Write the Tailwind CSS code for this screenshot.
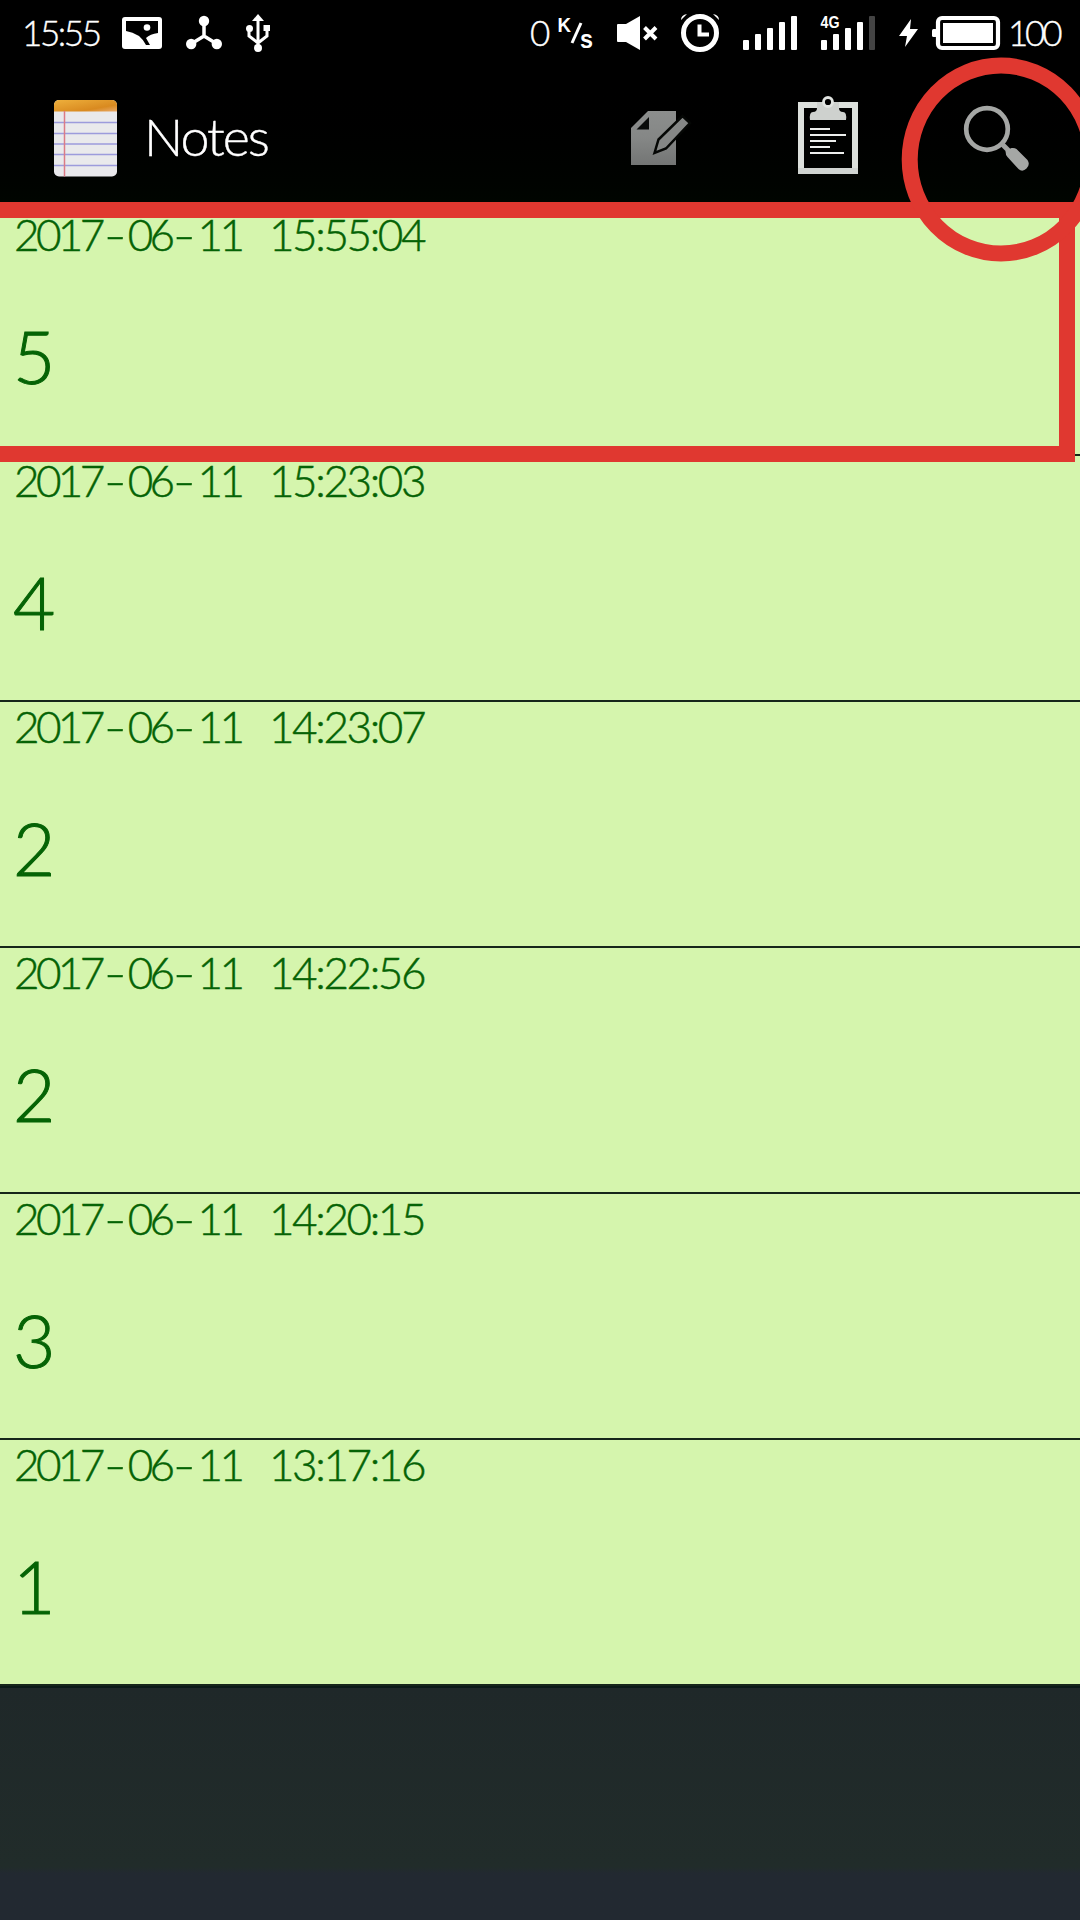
<!DOCTYPE html>
<html lang="en">
<head>
<meta charset="utf-8">
<title>Notes</title>
<script src="https://cdn.jsdelivr.net/npm/@tailwindcss/browser@4"></script>
</head>
<body class="relative flex h-[1920px] w-[1080px] flex-col overflow-hidden bg-[#202b2b] font-['Lato',sans-serif] font-light">

<!-- status bar -->
<div class="flex h-[66px] w-full shrink-0 bg-black text-white [-webkit-text-stroke:0.4px_white]">
  <div class="w-[110px] pl-[22px] pt-[10px] text-[35px] leading-[44px] tracking-[-2.400px] whitespace-nowrap">15:55</div>
  <svg class="w-[65px] h-[66px]" viewBox="110 0 65 66"><rect x="122" y="17" width="40" height="32" rx="3" fill="#fff"/><path d="M126 21h32v12q-8 1-12 5l4 7h-4Q140 33 126 31z" fill="#000"/><circle cx="147" cy="27.500" r="3.300" fill="#fff"/></svg>
  <svg class="w-[60px] h-[66px]" viewBox="175 0 60 66" fill="#fff"><path d="M204 21v15l-13 8M204 36l13 8" stroke="#fff" stroke-width="3.500" fill="none"/><circle cx="204" cy="21" r="5.200"/><circle cx="191.200" cy="44" r="5.200"/><circle cx="216.800" cy="44" r="5.200"/></svg>
  <svg class="w-[285px] h-[66px]" viewBox="235 0 285 66" fill="#fff"><path d="M258 18v30M249 29v7l9 7M267 29v7l-9 7" stroke="#fff" stroke-width="3" fill="none"/><path d="M258 14l6 7h-12z"/><circle cx="258" cy="48" r="4"/><circle cx="249.500" cy="28.500" r="3.500"/><path d="M263.500 25h6.500v6h-6.500z"/></svg>
  <div class="w-[36px] pl-[10px] pt-[10px] text-[35px] leading-[44px]">0</div>
  <svg class="w-[54px] h-[66px]" viewBox="556 0 54 66" fill="#fff" font-family="Liberation Sans" font-weight="bold" font-size="21"><text x="557.500" y="32" textLength="13.500" lengthAdjust="spacingAndGlyphs">K</text><text x="580" y="48" font-size="25" textLength="13" lengthAdjust="spacingAndGlyphs">s</text><path d="M581 23l-9 20" stroke="#fff" stroke-width="3"/></svg>
  <svg class="w-[60px] h-[66px]" viewBox="610 0 60 66" fill="#fff"><path d="M618 24h8l14-8v34l-14-8h-8q-1 0-1-1v-16q0-1 1-1z"/><path d="M644.500 27.500l11.500 11.500M656 27.500L644.500 39" stroke="#fff" stroke-width="4"/></svg>
  <svg class="w-[65px] h-[66px]" viewBox="670 0 65 66" fill="none" stroke="#fff"><circle cx="700" cy="33" r="16.500" stroke-width="5"/><path d="M699.500 24.500v10h9.500" stroke-width="4"/><path d="M681 20q0-5 6-6zM719 20q0-5-6-6z" fill="#fff" stroke="none"/></svg>
  <svg class="w-[75px] h-[66px]" viewBox="735 0 75 66" fill="#fff"><rect x="743" y="40" width="6" height="10" rx="1"/><rect x="755" y="34" width="6" height="16" rx="1"/><rect x="767" y="28" width="6" height="22" rx="1"/><rect x="779" y="22" width="6" height="28" rx="1"/><rect x="791" y="16" width="6" height="34" rx="1"/></svg>
  <svg class="w-[80px] h-[66px]" viewBox="810 0 80 66" fill="#fff"><text x="820.500" y="28" font-family="Liberation Sans" font-weight="bold" font-size="16" textLength="19" lengthAdjust="spacingAndGlyphs">4G</text><rect x="821" y="40" width="6" height="10" rx="1"/><rect x="833" y="34" width="6" height="16" rx="1"/><rect x="845" y="28" width="6" height="22" rx="1"/><rect x="857" y="22" width="6" height="28" rx="1"/><rect x="869" y="16" width="6" height="34" rx="1" fill="#444"/></svg>
  <svg class="w-[35px] h-[66px]" viewBox="890 0 35 66" fill="#fff"><path d="M911 19l-12 17h8l-2 11 13-18h-8z"/></svg>
  <svg class="w-[80px] h-[66px]" viewBox="925 0 80 66" fill="#fff"><rect x="938" y="18" width="60" height="30" rx="4" fill="none" stroke="#fff" stroke-width="4.200"/><rect x="943" y="23" width="50" height="20"/><rect x="932" y="29" width="5" height="8" rx="1.500"/></svg>
  <div class="w-[75px] pl-[3px] pt-[10px] text-[35px] leading-[44px] tracking-[-3.200px] whitespace-nowrap">100</div>
</div>

<!-- action bar -->
<div class="flex h-[144px] w-full shrink-0 bg-linear-to-b from-black to-[#000600] text-white">
  <svg class="w-[143px] h-[144px]" viewBox="0 66 143 144">
    <defs><linearGradient id="or" x2="1" y2="1"><stop stop-color="#eeb03c"/><stop offset=".7" stop-color="#d98a20"/><stop offset="1" stop-color="#e9a968"/></linearGradient>
    <clipPath id="pad"><rect x="54" y="100" width="63" height="76.500" rx="5"/></clipPath></defs>
    <g clip-path="url(#pad)"><path d="M54 100h63v77H54z" fill="#e9e9ec"/><path d="M54 100h63v11.500H54z" fill="url(#or)"/><path d="M54 122.500h63M54 133.500h63M54 144h63M54 154.500h63M54 165.500h63" stroke="#9c9bdc" stroke-width="1.500"/><path d="M64.500 111v66" stroke="#dc7b86" stroke-width="1.500"/></g>
  </svg>
  <div class="w-[467px] pt-[38px] pl-[1px] text-[52px] leading-[64px] tracking-[-2px] [-webkit-text-stroke:0.4px_white]">Notes</div>
  <svg class="w-[150px] h-[144px]" viewBox="610 66 150 144">
    <defs><linearGradient id="dg" x2="0" y2="1"><stop stop-color="#8c8e8d"/><stop offset=".5" stop-color="#858786"/><stop offset="1" stop-color="#737574"/></linearGradient></defs>
    <path d="M648 111h28v54h-45v-37z" fill="url(#dg)"/><path d="M649 117v12.500h-12.500z" fill="#090b0a"/>
    <path d="M654.500 153l4-13.500 24-23.500 7.500 7-24 25.500z" fill="#858786" stroke="#050705" stroke-width="2.500"/>
  </svg>
  <svg class="w-[150px] h-[144px]" viewBox="760 66 150 144">
    <path d="M801 105h54v66h-54z" fill="none" stroke="#dce0dc" stroke-width="6"/>
    <path d="M798 168h60v6h-60z" fill="#d0d4d1"/>
    <path d="M817 102h22v6q0 4 4 4t3 8h-36q-1-8 3-8t4-4z" fill="#ced1ce"/><circle cx="828" cy="102" r="4.500" fill="#000" stroke="#e1e4e1" stroke-width="2.800"/>
    <path d="M810 129h20M810 135h36M810 141h26M810 147h20M810 153h34" stroke="#eceeec" stroke-width="2"/>
  </svg>
  <svg class="w-[170px] h-[144px]" viewBox="910 66 170 144">
    <circle cx="987" cy="129" r="20.800" fill="none" stroke="#a5a7a5" stroke-width="4.700"/><path d="M1001 143l9 9" stroke="#a0a2a0" stroke-width="5"/>
    <path d="M1005.500 151q0 4 2 6l11 12q4 3.500 8-.5t1-8.500l-11-11q-2-1.500-5-1z" fill="#a5a7a5"/>
  </svg>
</div>

<!-- notes -->
<div id="list" class="flex w-full shrink-0 flex-col"></div>

<div class="h-[2px] w-full shrink-0 bg-[#0b1a18]"></div>
<div class="w-full grow bg-linear-to-b from-[#1f2829] from-0% via-[#212c2a] via-77% to-[#222931] to-80%"></div>

<!-- highlight marks over the first note and the search button -->
<div class="absolute left-0 top-[202px] h-[260px] w-[1075px] border-y-[16px] border-r-[16px] border-[#e03830]"></div>
<svg class="absolute left-[890px] top-[50px] h-[220px] w-[190px]" viewBox="890 50 190 220"><ellipse cx="1001" cy="159.500" rx="91.300" ry="94" fill="none" stroke="#e03830" stroke-width="16"/></svg>

<script>
const notes = [
  ['2017-06-11', '15:55:04', '5'],
  ['2017-06-11', '15:23:03', '4'],
  ['2017-06-11', '14:23:07', '2'],
  ['2017-06-11', '14:22:56', '2'],
  ['2017-06-11', '14:20:15', '3'],
  ['2017-06-11', '13:17:16', '1'],
];
const dash = '<span class="inline-block w-[26px] text-center"><span class="inline-block scale-x-[1.400] tracking-normal">-</span></span>';
document.getElementById('list').innerHTML = notes.map(([d, t, n]) => `
  <div class="flex h-[246px] w-full flex-col border-b-2 border-[#16261a] bg-[#d5f5ad] text-[#056305] [-webkit-text-stroke:0.5px_#056305]">
    <div class="flex h-[50px] pl-[14px] text-[44px] leading-[48px] whitespace-nowrap">
      <span class="w-[255px] tracking-[-3.600px]">${d.replaceAll('-', dash)}</span>
      <span class="tracking-[-2.400px]">${t}</span>
    </div>
    <div class="pl-[13px] pt-[51px] text-[73px] leading-[90px] [-webkit-text-stroke:1px_#056305]">${n}</div>
  </div>`).join('');
</script>
</body>
</html>
